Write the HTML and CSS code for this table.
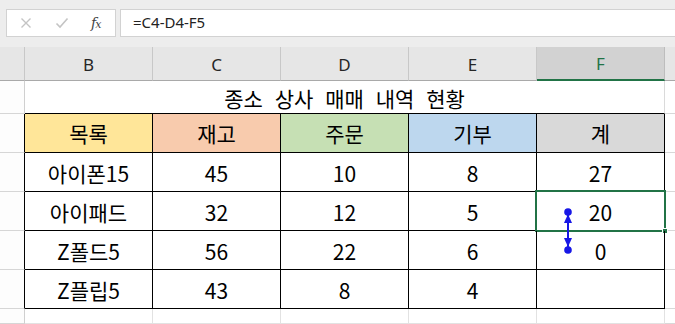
FILE: index.html
```html
<!DOCTYPE html>
<html lang="ko">
<head>
<meta charset="utf-8">
<link rel="stylesheet" href="styles.css">
</head>
<body>
<div class="app">
  <div class="formula-bar">
    <div class="fx-box">
      <svg class="ico" width="12" height="12" viewBox="0 0 12 12"><path d="M1.5 1.5 L10.5 10.5 M10.5 1.5 L1.5 10.5" stroke="#c4c4c4" stroke-width="1.4" fill="none"/></svg>
      <svg class="ico" width="14" height="12" viewBox="0 0 14 12"><path d="M1.5 6.5 L5 10 L12.5 1.5" stroke="#c4c4c4" stroke-width="1.6" fill="none"/></svg>
      <span class="fx">f<span class="x">x</span></span>
    </div>
    <div class="formula-input">=C4-D4-F5</div>
  </div>
  <div class="sheet">
    <div class="corner"></div>
    <div class="colhead">B</div>
    <div class="colhead">C</div>
    <div class="colhead">D</div>
    <div class="colhead">E</div>
    <div class="colhead sel">F</div>
    <div class="colhead g"></div>

    <div class="rowhead"></div>
    <div class="title">종소 상사 매매 내역 현황</div>
    <div class="grid g"></div>

    <div class="rowhead t"></div>
    <div class="cell h yellow">목록</div>
    <div class="cell h orange">재고</div>
    <div class="cell h green">주문</div>
    <div class="cell h blue">기부</div>
    <div class="cell h gray">계</div>
    <div class="grid g"></div>

    <div class="rowhead t"></div>
    <div class="cell">아이폰15</div>
    <div class="cell">45</div>
    <div class="cell">10</div>
    <div class="cell">8</div>
    <div class="cell">27</div>
    <div class="grid g"></div>

    <div class="rowhead t"></div>
    <div class="cell">아이패드</div>
    <div class="cell">32</div>
    <div class="cell">12</div>
    <div class="cell">5</div>
    <div class="cell active">20<div class="selection"><div class="handle"></div></div></div>
    <div class="grid g"></div>

    <div class="rowhead t"></div>
    <div class="cell">Z폴드5</div>
    <div class="cell">56</div>
    <div class="cell">22</div>
    <div class="cell">6</div>
    <div class="cell">0</div>
    <div class="grid g"></div>

    <div class="rowhead t"></div>
    <div class="cell">Z플립5</div>
    <div class="cell">43</div>
    <div class="cell">8</div>
    <div class="cell">4</div>
    <div class="cell"></div>
    <div class="grid g"></div>

    <div class="rowhead"></div>
    <div class="grid"></div>
    <div class="grid"></div>
    <div class="grid"></div>
    <div class="grid"></div>
    <div class="grid"></div>
    <div class="grid g"></div>

    <svg class="trace" width="16" height="52" viewBox="0 0 16 52">
      <line x1="8" y1="7" x2="8" y2="45" stroke="#1717e6" stroke-width="2"/>
      <circle cx="8" cy="7" r="3.8" fill="#1717e6"/>
      <circle cx="8" cy="45" r="3.8" fill="#1717e6"/>
      <path d="M8 9 L12 18 L4 18 Z" fill="#1717e6"/>
      <path d="M8 42 L12 33 L4 33 Z" fill="#1717e6"/>
    </svg>
  </div>
</div>
</body>
</html>
```

FILE: styles.css
```css
* { box-sizing: border-box; }
html, body { margin: 0; padding: 0; }
body {
  width: 675px;
  height: 324px;
  overflow: hidden;
  background: #ffffff;
  font-family: "Noto Sans CJK KR", "Noto Sans", sans-serif;
}
.app { width: 675px; height: 324px; display: flex; flex-direction: column; }

.formula-bar {
  height: 47px;
  flex: none;
  background: #ededed;
  display: flex;
  align-items: flex-start;
  padding-top: 9px;
  padding-left: 6px;
}
.fx-box {
  width: 110px;
  height: 28px;
  background: #ffffff;
  border: 1px solid #d2d2d2;
  display: flex;
  align-items: center;
  padding-left: 13px;
}
.fx-box .ico { display: block; }
.fx-box .ico:nth-child(1) { margin-right: 23px; }
.fx-box .ico:nth-child(2) { margin-right: 22px; }
.fx {
  font-family: "DejaVu Serif", "Liberation Serif", serif;
  font-style: italic;
  font-size: 14px;
  color: #444444;
  letter-spacing: -1px;
  line-height: 1;
}
.fx .x { font-size: 11px; }
.formula-input {
  flex: 1;
  height: 28px;
  margin-left: 4px;
  background: #ffffff;
  border: 1px solid #d2d2d2;
  border-right: none;
  font-family: "Noto Sans", sans-serif;
  font-size: 15px;
  line-height: 25px;
  padding-left: 12px;
  color: #222222;
}

.sheet {
  position: relative;
  flex: 1;
  display: grid;
  grid-template-columns: 25px repeat(5, 128px) 1fr;
  grid-template-rows: 34px 33px 39px 39px 39px 39px 39px 1fr;
}
.corner, .colhead {
  background: #e6e6e6;
  border-right: 1px solid #c8c8c8;
  border-bottom: 1px solid #a9a9a9;
  font-family: "Noto Sans", sans-serif;
  font-size: 17px;
  color: #262626;
  display: flex;
  align-items: center;
  justify-content: center;
  padding-top: 1px;
}
.colhead.sel {
  background: #d2d2d2;
  color: #217346;
  border-bottom: 2px solid #217346;
  border-right-color: #bdbdbd;
}
.colhead.g { border-right: none; }

.rowhead {
  background: #fdfdfd;
  border-right: 1px solid #d0d0d0;
  border-bottom: 1px solid #d6d6d6;
}
.rowhead.t { border-right-color: #000000; }

.title {
  grid-column: span 5;
  border-right: 1px solid #dadada;
  border-bottom: 1px solid #000000;
  font-size: 21px;
  word-spacing: 6px;
  display: flex;
  align-items: center;
  justify-content: center;
  color: #000000;
  padding-top: 1px;
}
.grid {
  border-right: 1px solid #e2e2e2;
  border-bottom: 1px solid #e2e2e2;
}
.grid.g { border-right: none; border-bottom-color: #d8d8d8; }

.cell {
  position: relative;
  border-right: 1px solid #000000;
  border-bottom: 1px solid #000000;
  font-size: 21px;
  color: #000000;
  display: flex;
  align-items: center;
  justify-content: center;
  padding-top: 2px;
}
.cell.h { padding-top: 0; }
.yellow { background: #ffe699; }
.orange { background: #f8cbad; }
.green { background: #c6e0b4; }
.blue { background: #bdd7ee; }
.gray { background: #d9d9d9; }

.selection {
  position: absolute;
  top: -2px;
  left: -2px;
  width: 131px;
  height: 42px;
  border: 2px solid #217346;
  pointer-events: none;
}
.handle {
  position: absolute;
  right: -4px;
  bottom: -4px;
  width: 6px;
  height: 6px;
  background: #217346;
  border: 1px solid #ffffff;
}
.trace {
  position: absolute;
  left: 560px;
  top: 158px;
  z-index: 2;
}
```
